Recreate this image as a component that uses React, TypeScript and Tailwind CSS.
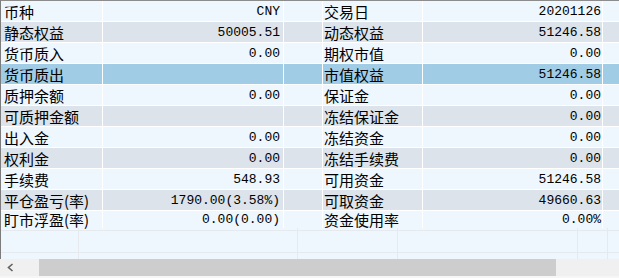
const rows: [string, string, string, string][] = [
  ['币种', 'CNY', '交易日', '20201126'],
  ['静态权益', '50005.51', '动态权益', '51246.58'],
  ['货币质入', '0.00', '期权市值', '0.00'],
  ['货币质出', '', '市值权益', '51246.58'],
  ['质押余额', '0.00', '保证金', '0.00'],
  ['可质押金额', '', '冻结保证金', '0.00'],
  ['出入金', '0.00', '冻结资金', '0.00'],
  ['权利金', '0.00', '冻结手续费', '0.00'],
  ['手续费', '548.93', '可用资金', '51246.58'],
  ['平仓盈亏(率)', '1790.00(3.58%)', '可取资金', '49660.63'],
  ['盯市浮盈(率)', '0.00(0.00)', '资金使用率', '0.00%'],
];

const SELECTED = 3;

function rowBg(i: number) {
  if (i === SELECTED) return 'bg-[#a0cde5]';
  return i % 2 === 1 ? 'bg-[#dce3ea]' : 'bg-[#eef6fe]';
}

function DataRow({ cells, index, last }: { cells: [string, string, string, string]; index: number; last: boolean }) {
  const [l1, v1, l2, v2] = cells;
  return (
    <div className={`flex shrink-0 ${rowBg(index)} ${last ? 'h-[17px]' : 'h-[21px] border-b border-white'}`}>
      <div className="w-[102px] shrink-0 border-r border-white flex items-center pl-[3px] whitespace-nowrap">
        {l1}
      </div>
      <div className="w-[181px] shrink-0 border-r border-white flex items-center justify-end pr-[3px] font-['Liberation_Mono',monospace] text-[13px]">
        {v1}
      </div>
      <div className="w-[39px] shrink-0 border-r border-white" />
      <div className="w-[100px] shrink-0 border-r border-white flex items-center pl-[1px] whitespace-nowrap">
        {l2}
      </div>
      <div className="w-[180px] shrink-0 border-r border-white flex items-center justify-end pr-[1px] font-['Liberation_Mono',monospace] text-[13px]">
        {v2}
      </div>
      <div className="flex-1" />
    </div>
  );
}

function EmptyGridRow({ h, bottom }: { h: string; bottom: boolean }) {
  return (
    <div className={`flex ${h} ${bottom ? 'border-b border-[#e6e9ed]' : ''}`}>
      <div className="w-[78px] shrink-0 border-r border-[#e6e9ed]" />
      <div className="w-[219px] shrink-0 border-r border-[#e6e9ed]" />
      <div className="w-[100px] shrink-0 border-r border-[#e6e9ed]" />
      <div className="w-[180px] shrink-0 border-r border-[#e6e9ed]" />
      <div className="w-[30px] shrink-0 border-r border-[#e6e9ed]" />
      <div className="flex-1" />
    </div>
  );
}

export default function App() {
  return (
    <div className="w-[619px] h-[278px] bg-[#f0f0f0] flex flex-col overflow-hidden font-['Noto_Sans_CJK_SC',sans-serif] text-[15px] leading-none text-black">
      <div className="h-[259px] shrink-0 flex flex-col border-t border-l border-t-[#8c8c8c] border-l-[#7c7c7c] bg-[#eef6fe]">
        {rows.map((r, i) => (
          <DataRow key={i} cells={r} index={i} last={i === rows.length - 1} />
        ))}
        <div className="flex-1 flex flex-col">
          <EmptyGridRow h="h-[3px]" bottom />
          <EmptyGridRow h="h-[22px]" bottom />
          <div className="flex-1 flex flex-col">
            <EmptyGridRow h="flex-1" bottom={false} />
          </div>
        </div>
      </div>
      <div className="h-[17px] shrink-0 flex">
        <div className="w-[39px] shrink-0 flex items-center pl-[7px] bg-[#f0f0f0]">
          <svg width="7" height="9" viewBox="0 0 7 9">
            <polyline points="5.5,1 1.5,4.5 5.5,8" fill="none" stroke="#606060" strokeWidth="1.6" />
          </svg>
        </div>
        <div className="w-[517px] shrink-0 bg-[#cdcdcd]" />
        <div className="flex-1 bg-[#f0f0f0]" />
      </div>
      <div className="flex-1 bg-[#f6f6f6]" />
    </div>
  );
}
